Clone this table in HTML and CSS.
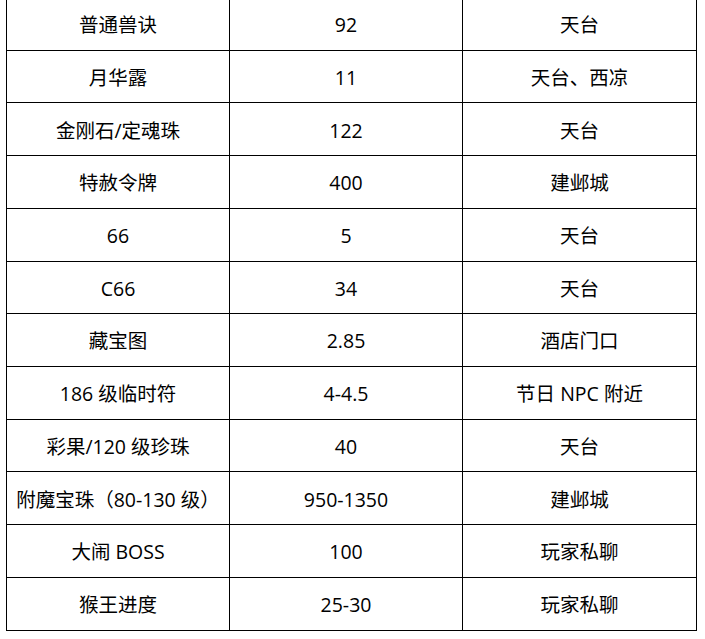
FILE: index.html
```html
<!DOCTYPE html>
<html lang="zh-CN">
<head>
<meta charset="utf-8">
<title>价格表</title>
<link rel="stylesheet" href="styles.css">
</head>
<body>
<div class="table">
  <div class="cell">普通兽诀</div><div class="cell">92</div><div class="cell">天台</div>
  <div class="cell">月华露</div><div class="cell">11</div><div class="cell">天台、西凉</div>
  <div class="cell">金刚石/定魂珠</div><div class="cell">122</div><div class="cell">天台</div>
  <div class="cell">特赦令牌</div><div class="cell">400</div><div class="cell">建邺城</div>
  <div class="cell">66</div><div class="cell">5</div><div class="cell">天台</div>
  <div class="cell">C66</div><div class="cell">34</div><div class="cell">天台</div>
  <div class="cell">藏宝图</div><div class="cell">2.85</div><div class="cell">酒店门口</div>
  <div class="cell">186 级临时符</div><div class="cell">4-4.5</div><div class="cell">节日 NPC 附近</div>
  <div class="cell">彩果/120 级珍珠</div><div class="cell">40</div><div class="cell">天台</div>
  <div class="cell">附魔宝珠（80-130 级）</div><div class="cell">950-1350</div><div class="cell">建邺城</div>
  <div class="cell">大闹 BOSS</div><div class="cell">100</div><div class="cell">玩家私聊</div>
  <div class="cell">猴王进度</div><div class="cell">25-30</div><div class="cell">玩家私聊</div>
</div>
</body>
</html>
```
FILE: styles.css
```css
html, body {
  margin: 0;
  padding: 0;
  background: #ffffff;
}
body {
  font-family: "Open Sans", "Noto Sans CJK SC", sans-serif;
  font-size: 19.5px;
  color: #000000;
  overflow: hidden;
}
.table {
  display: grid;
  grid-template-columns: 222px 232px 233px;
  grid-auto-rows: 51.73px;
  gap: 1px;
  padding: 1px;
  background: #000000;
  width: max-content;
  margin: -3px 0 0 6px;
}
.cell {
  background: #ffffff;
  display: flex;
  align-items: center;
  justify-content: center;
  padding-top: 2px;
  white-space: nowrap;
  line-height: 1;
}
```
